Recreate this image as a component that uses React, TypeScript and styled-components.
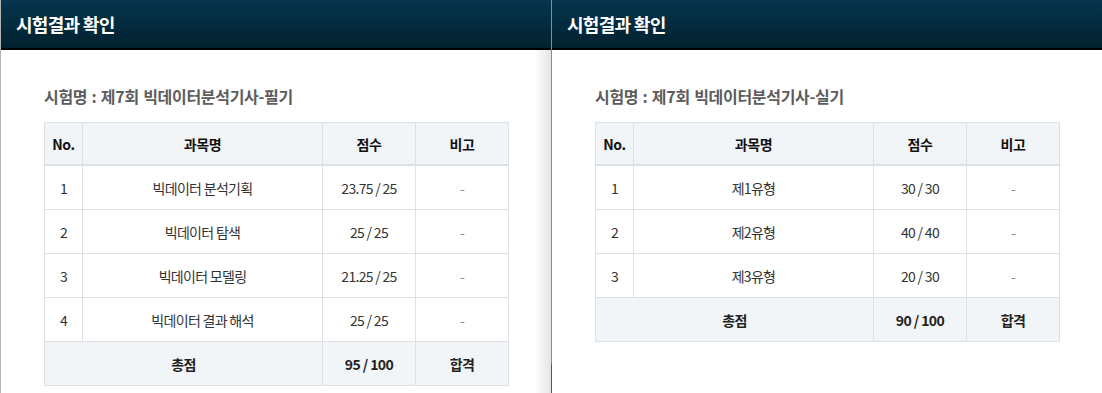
import styled, { createGlobalStyle } from "styled-components";

const GlobalStyle = createGlobalStyle`
  html, body {
    margin: 0;
    padding: 0;
    background: #ffffff;
    font-family: "Noto Sans CJK KR", "Noto Sans", sans-serif;
  }
`;

type Row = { no: number; name: string; score: string };

type Exam = {
  title: string;
  rows: Row[];
  total: string;
  result: string;
};

const exams: Exam[] = [
  {
    title: "시험명 : 제7회 빅데이터분석기사-필기",
    rows: [
      { no: 1, name: "빅데이터 분석기획", score: "23.75 / 25" },
      { no: 2, name: "빅데이터 탐색", score: "25 / 25" },
      { no: 3, name: "빅데이터 모델링", score: "21.25 / 25" },
      { no: 4, name: "빅데이터 결과 해석", score: "25 / 25" },
    ],
    total: "95 / 100",
    result: "합격",
  },
  {
    title: "시험명 : 제7회 빅데이터분석기사-실기",
    rows: [
      { no: 1, name: "제1유형", score: "30 / 30" },
      { no: 2, name: "제2유형", score: "40 / 40" },
      { no: 3, name: "제3유형", score: "20 / 30" },
    ],
    total: "90 / 100",
    result: "합격",
  },
];

const Page = styled.div`
  display: flex;
  width: 1102px;
  height: 393px;
  overflow: hidden;
`;

const Panel = styled.section<{ $first?: boolean }>`
  position: relative;
  box-sizing: border-box;
  width: ${(p) => (p.$first ? "551px" : "550px")};
  height: 100%;
  display: flex;
  flex-direction: column;
  border-left: ${(p) => (p.$first ? "1px solid #b4b4b4" : "none")};

  &::after {
    content: "";
    display: ${(p) => (p.$first ? "block" : "none")};
    position: absolute;
    top: 50px;
    right: 0;
    bottom: 0;
    width: 16px;
    background: linear-gradient(to right, rgba(230, 230, 230, 0), #e4e4e4);
    pointer-events: none;
  }
`;

const Divider = styled.div`
  width: 1px;
  height: 100%;
  background: linear-gradient(to bottom, #8c8c8c 0%, #8c8c8c 92%, #3d5a78 93%, #3d5a78 100%);
`;

const Header = styled.header`
  height: 48px;
  border-bottom: 2px solid #000000;
  background: linear-gradient(to bottom, #06354e, #02212f);
  display: flex;
  align-items: center;
  padding-left: 15px;
  color: #ffffff;
  font-size: 18px;
  font-weight: 700;
  letter-spacing: -0.7px;
`;

const Body = styled.div`
  padding: 34px 0 0 43px;
`;

const ExamName = styled.h3`
  margin: 0 0 14px 0;
  height: 24px;
  line-height: 24px;
  font-size: 16px;
  font-weight: 700;
  color: #5c5c5c;
  letter-spacing: -0.3px;
  word-spacing: 1px;
`;

const Table = styled.table`
  width: 464px;
  table-layout: fixed;
  border-collapse: collapse;
  border: 1px solid #dde1e6;
  font-size: 14px;
`;

const HeadCell = styled.th<{ $w: number }>`
  width: ${(p) => p.$w}px;
  height: 41px;
  padding: 0;
  background: #f2f5f7;
  border: 1px solid #dde1e6;
  border-bottom: 2px solid #dde1e6;
  color: #111111;
  font-weight: 700;
  letter-spacing: -0.3px;
`;

const Cell = styled.td<{ $muted?: boolean }>`
  height: 43px;
  padding: 0;
  text-align: center;
  border: 1px solid #dde1e6;
  color: ${(p) => (p.$muted ? "#888888" : "#333333")};
  font-weight: 400;
  letter-spacing: -0.7px;
`;

const TotalCell = styled.td`
  height: 43px;
  padding: 0;
  text-align: center;
  background: #f2f5f7;
  border: 1px solid #dde1e6;
  color: #222222;
  font-weight: 700;
  letter-spacing: -0.6px;
`;

const ResultPanel = ({ exam, first }: { exam: Exam; first?: boolean }) => {
  return (
    <Panel $first={first}>
      <Header>시험결과 확인</Header>
      <Body>
        <ExamName>{exam.title}</ExamName>
        <Table>
          <thead>
            <tr>
              <HeadCell $w={37}>No.</HeadCell>
              <HeadCell $w={239}>과목명</HeadCell>
              <HeadCell $w={92}>점수</HeadCell>
              <HeadCell $w={92}>비고</HeadCell>
            </tr>
          </thead>
          <tbody>
            {exam.rows.map((r) => (
              <tr key={r.no}>
                <Cell>{r.no}</Cell>
                <Cell>{r.name}</Cell>
                <Cell>{r.score}</Cell>
                <Cell $muted>-</Cell>
              </tr>
            ))}
            <tr>
              <TotalCell colSpan={2}>총점</TotalCell>
              <TotalCell>{exam.total}</TotalCell>
              <TotalCell>{exam.result}</TotalCell>
            </tr>
          </tbody>
        </Table>
      </Body>
    </Panel>
  );
};

export default function App() {
  return (
    <>
      <GlobalStyle />
      <Page>
        <ResultPanel exam={exams[0]} first />
        <Divider />
        <ResultPanel exam={exams[1]} />
      </Page>
    </>
  );
}
